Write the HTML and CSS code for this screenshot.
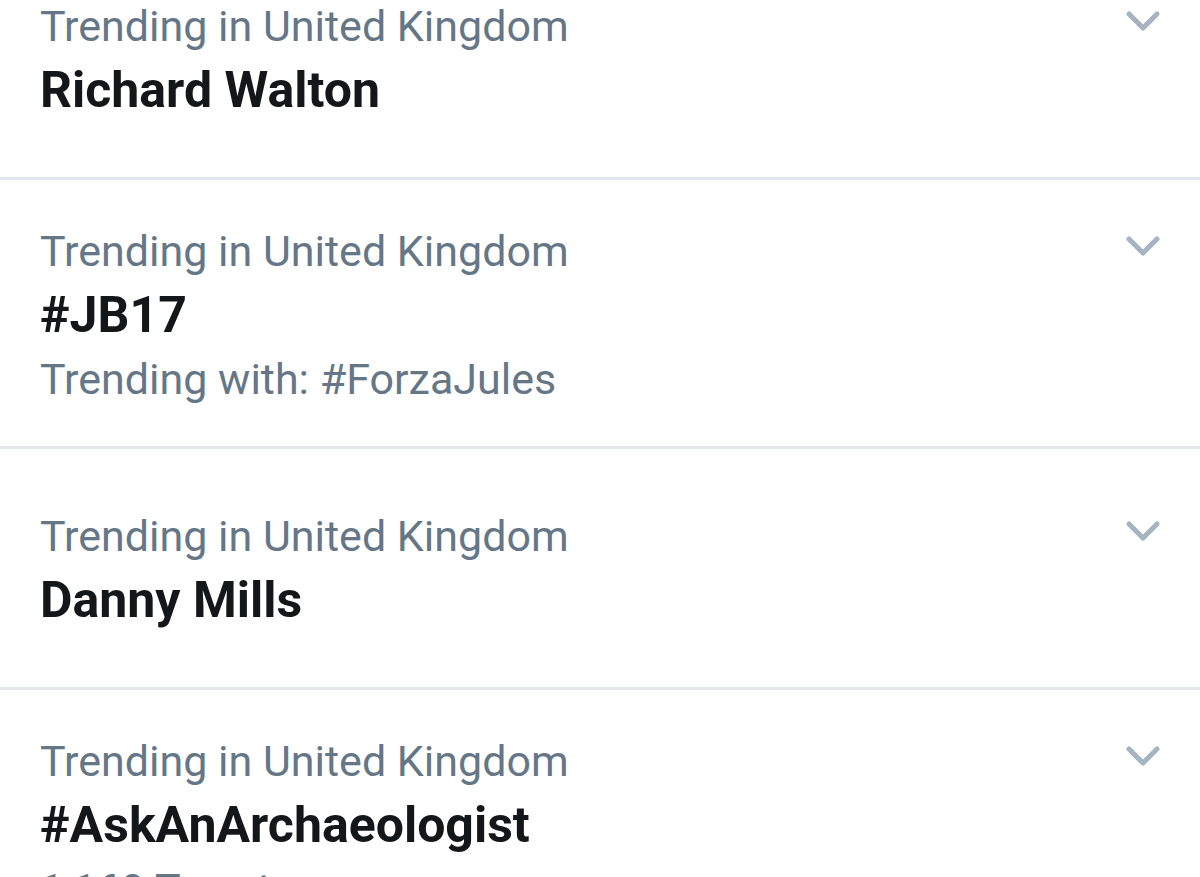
FILE: index.html
```html
<!DOCTYPE html>
<html>
<head>
<meta charset="utf-8">
<link rel="stylesheet" href="styles.css">
</head>
<body>
<div class="list">
  <div class="trend short">
    <div class="body">
      <div class="meta">Trending in United Kingdom</div>
      <div class="name">Richard Walton</div>
    </div>
    <svg class="chev" viewBox="0 0 36 24"><path d="M4 4 L18 18 L32 4" /></svg>
  </div>
  <div class="trend">
    <div class="body">
      <div class="meta">Trending in United Kingdom</div>
      <div class="name">#JB17</div>
      <div class="meta">Trending with: #ForzaJules</div>
    </div>
    <svg class="chev" viewBox="0 0 36 24"><path d="M4 4 L18 18 L32 4" /></svg>
  </div>
  <div class="trend short">
    <div class="body">
      <div class="meta">Trending in United Kingdom</div>
      <div class="name">Danny Mills</div>
    </div>
    <svg class="chev" viewBox="0 0 36 24"><path d="M4 4 L18 18 L32 4" /></svg>
  </div>
  <div class="trend">
    <div class="body">
      <div class="meta">Trending in United Kingdom</div>
      <div class="name">#AskAnArchaeologist</div>
      <div class="meta">1,169 Tweets</div>
    </div>
    <svg class="chev" viewBox="0 0 36 24"><path d="M4 4 L18 18 L32 4" /></svg>
  </div>
</div>
</body>
</html>
```
FILE: styles.css
```css
html, body {
  margin: 0;
  padding: 0;
  background: #ffffff;
  overflow: hidden;
}
body {
  font-family: Roboto, "Liberation Sans", sans-serif;
  width: 1200px;
  height: 877px;
}
.list {
  margin-top: -61px;
}
.trend {
  display: flex;
  align-items: flex-start;
  justify-content: space-between;
  padding: 39px 39px 35px 40px;
  border-bottom: 3px solid #e1e8ed;
}
.trend.short {
  padding-top: 55px;
  padding-bottom: 55px;
}
.body {
  display: flex;
  flex-direction: column;
}
.meta {
  font-size: 43px;
  line-height: 64px;
  color: #657786;
  white-space: nowrap;
}
.name {
  font-size: 50px;
  line-height: 64px;
  font-weight: 700;
  color: #14171a;
  white-space: nowrap;
}
.chev {
  width: 36px;
  height: 24px;
  margin-top: 16px;
  fill: none;
  stroke: #a4b4c1;
  stroke-width: 5;
  stroke-linecap: round;
  stroke-linejoin: round;
  flex: none;
}
```
